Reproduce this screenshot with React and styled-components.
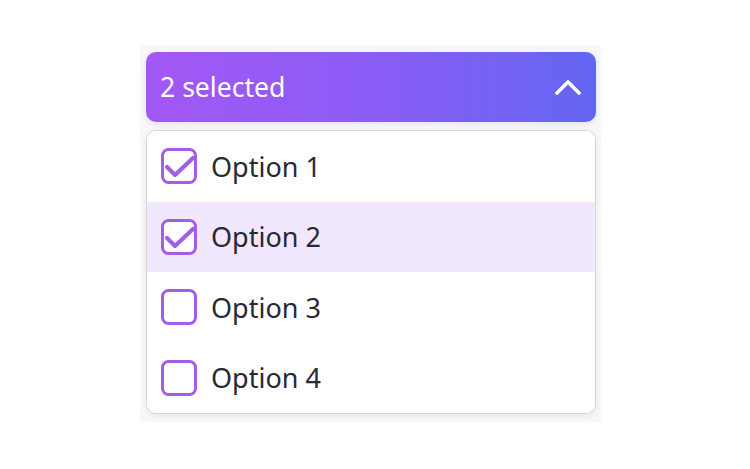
import React, { useState } from 'react';
import styled, { createGlobalStyle } from 'styled-components';

const GlobalStyle = createGlobalStyle`
  html, body {
    margin: 0;
    padding: 0;
    background: #ffffff;
    font-family: "Noto Sans", "Open Sans", sans-serif;
  }
`;

const Page = styled.div`
  width: 750px;
  height: 469px;
  display: flex;
  align-items: flex-start;
  justify-content: center;
  padding-top: 45px;
  box-sizing: border-box;
`;

const Panel = styled.div`
  width: 461px;
  margin-left: -9px;
  padding: 7px 5px 8px 6px;
  box-sizing: border-box;
  background: #f8f8f9;
  display: flex;
  flex-direction: column;
  gap: 8px;
`;

const Trigger = styled.button`
  height: 70px;
  width: 100%;
  border: none;
  border-radius: 10px;
  padding: 0 15px 0 14px;
  display: flex;
  align-items: center;
  justify-content: space-between;
  background: linear-gradient(90deg, #a357f4 0%, #8b5cf6 50%, #6366f1 100%);
  color: #ffffff;
  font-family: inherit;
  font-size: 26.6px;
  cursor: pointer;
  box-shadow: 0 2px 6px rgba(99, 102, 241, 0.15);
`;

const List = styled.div`
  background: #ffffff;
  border: 1px solid #d6d6da;
  border-radius: 10px;
  overflow: hidden;
  box-shadow: 0 2px 6px rgba(0, 0, 0, 0.08);
`;

const Row = styled.label`
  height: 70.5px;
  display: flex;
  align-items: center;
  gap: 14px;
  padding-left: 14px;
  background: ${props => props.highlight ? '#f1e7fe' : '#ffffff'};
  color: #262a33;
  font-size: 27px;
  cursor: pointer;
`;

const Box = styled.span`
  width: 36px;
  height: 36px;
  display: flex;
  flex-shrink: 0;
`;

const Checkbox = ({ checked }) => (
  <Box>
    <svg width="36" height="36" viewBox="0 0 36 36" fill="none">
      <rect x="1.5" y="1.5" width="33" height="33" rx="6" stroke="#a35ee8" strokeWidth="3" fill="#ffffff" />
      {checked && (
        <path d="M6 19 L14 27 L32 10" stroke="#a35ee8" strokeWidth="4.2" strokeLinecap="round" strokeLinejoin="round" />
      )}
    </svg>
  </Box>
);

const ChevronUp = () => (
  <svg width="26" height="16" viewBox="0 0 26 16" fill="none">
    <path d="M2 14 L13 3 L24 14" stroke="#ffffff" strokeWidth="3.6" strokeLinecap="round" strokeLinejoin="round" />
  </svg>
);

const options = ['Option 1', 'Option 2', 'Option 3', 'Option 4'];

const App = () => {
  const [selected, setSelected] = useState(['Option 1', 'Option 2']);

  const toggle = (opt) => {
    setSelected(prev => prev.includes(opt) ? prev.filter(o => o !== opt) : [...prev, opt]);
  };

  return (
    <>
      <GlobalStyle />
      <Page>
        <Panel>
          <Trigger type="button">
            <span>{selected.length} selected</span>
            <ChevronUp />
          </Trigger>
          <List>
            {options.map(opt => (
              <Row key={opt} highlight={opt === 'Option 2'} onClick={() => toggle(opt)}>
                <Checkbox checked={selected.includes(opt)} />
                {opt}
              </Row>
            ))}
          </List>
        </Panel>
      </Page>
    </>
  );
};

export default App;
